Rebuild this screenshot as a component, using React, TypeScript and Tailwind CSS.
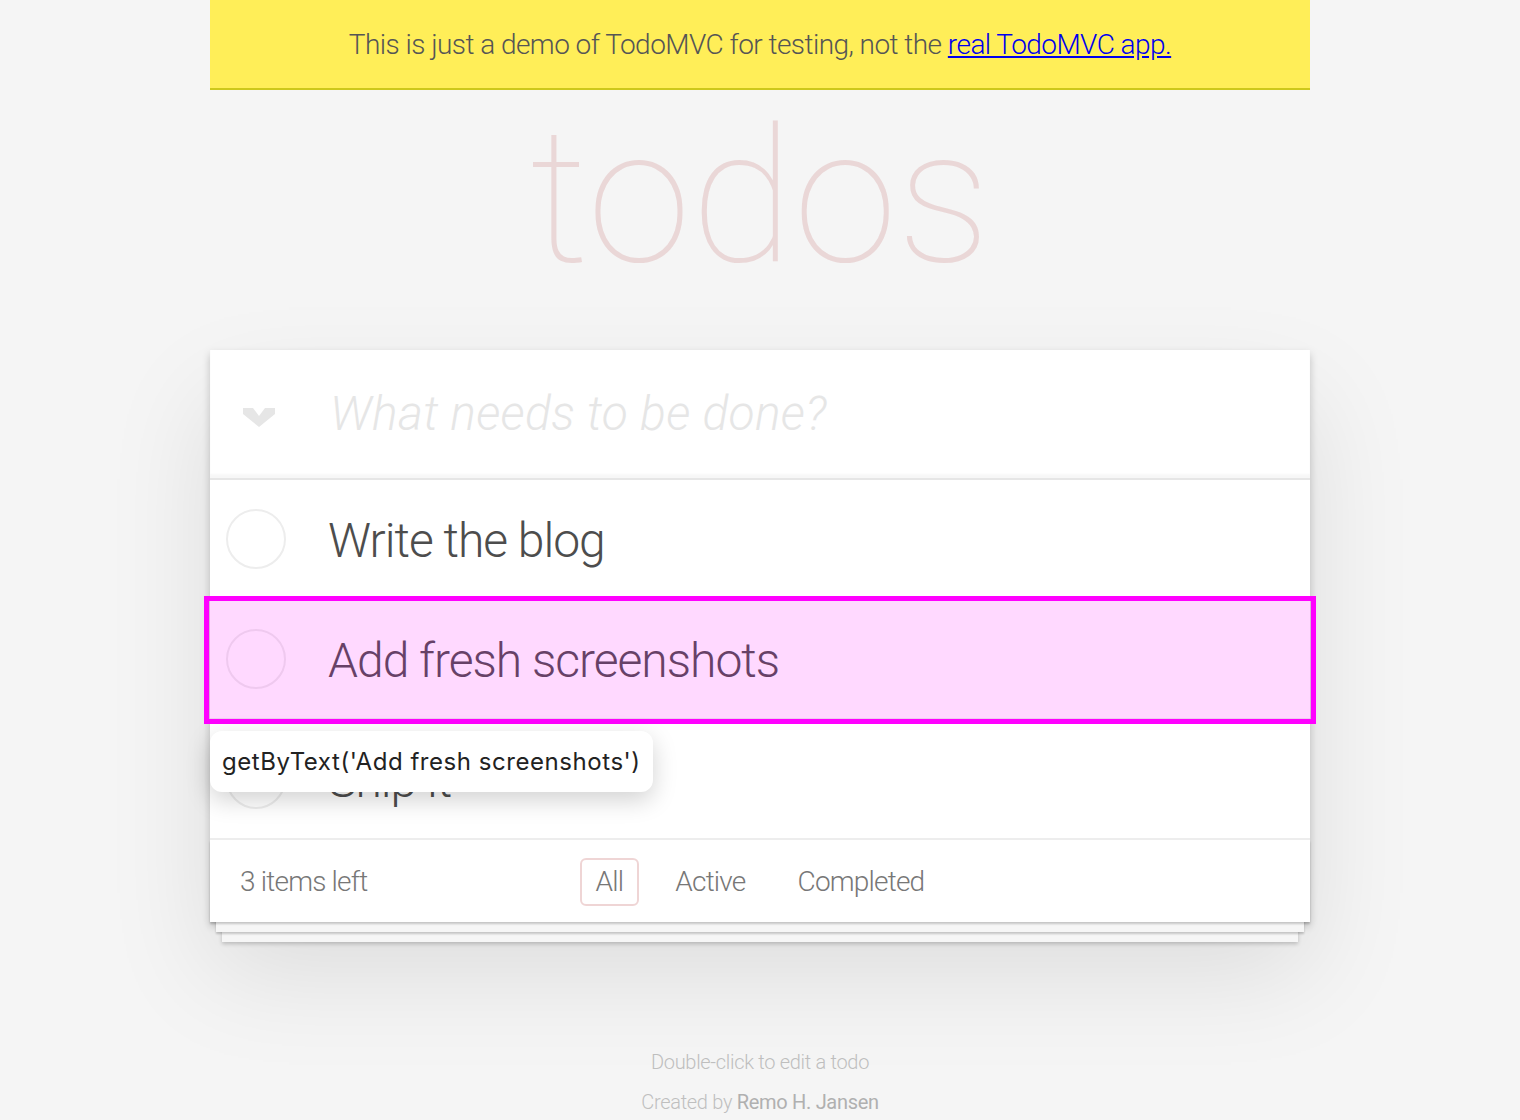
import React from "react";

type Todo = { id: number; title: string };

const todos: Todo[] = [
  { id: 1, title: "Write the blog" },
  { id: 2, title: "Add fresh screenshots" },
  { id: 3, title: "Ship it" },
];

function Chevron() {
  return (
    <svg width="32" height="20" viewBox="0 0 32 20" className="block">
      <polygon points="0,0 10,0 16,8 22,0 32,0 32,6 16,19 0,6" fill="#e6e6e6" />
    </svg>
  );
}

function Toggle() {
  return (
    <span className="block h-[60px] w-[60px] shrink-0 rounded-full border-2 border-[#ededed]" />
  );
}

export default function App() {
  return (
    <div className="min-h-screen bg-[#f5f5f5] font-['Roboto',sans-serif] text-[#4d4d4d]">
      <div className="mx-auto w-[1100px]">
        <div className="flex h-[90px] items-center justify-center border-b-2 border-[#cdc81b] bg-[#ffee58] pt-[2px] text-[28px] font-light tracking-[-0.55px] text-[#555]">
          <span>
            This is just a demo of TodoMVC for testing, not the{" "}
            <a href="#" className="text-[#0000ee] underline">
              real TodoMVC app.
            </a>
          </span>
        </div>

        <h1 className="h-[260px] pt-[7px] text-center text-[188px] font-thin leading-[200px] text-[rgba(175,47,47,0.15)]">
          todos
        </h1>

        <section className="relative bg-white shadow-[0_4px_8px_rgba(0,0,0,0.2),0_50px_100px_rgba(0,0,0,0.1)]">
          <header className="flex h-[128px] items-center shadow-[inset_0_-4px_2px_rgba(0,0,0,0.03)]">
            <div className="flex w-[120px] shrink-0 justify-center pr-[22px] pt-[8px]">
              <Chevron />
            </div>
            <span className="text-[48px] font-light italic tracking-[0.3px] text-[#e6e6e6]">
              What needs to be done?
            </span>
          </header>

          <ul className="relative border-t-2 border-[#e6e6e6]">
            {todos.map((todo) => (
              <li
                key={todo.id}
                className="flex h-[120px] items-center gap-[42px] border-b-2 border-[#ededed] pl-[16px]"
              >
                <Toggle />
                <label className="pt-[4px] text-[48px] font-light leading-[1.2] tracking-[-1px] text-[#4d4d4d]">
                  {todo.title}
                </label>
              </li>
            ))}

            <div className="absolute -left-[6px] top-[116px] h-[128px] w-[1112px] border-[5px] border-[#ff00ff] bg-[rgba(255,0,255,0.15)]" />

            <div className="absolute left-0 top-[251px] flex h-[61px] items-center rounded-[12px] bg-white px-[12px] font-['Inter',sans-serif] text-[24px] tracking-[0.55px] text-[#222] shadow-[0_8px_24px_rgba(0,0,0,0.18)]">
              getByText('Add fresh screenshots')
            </div>
          </ul>

          <footer className="grid h-[82px] grid-cols-[1fr_auto_1fr] items-center bg-white px-[30px] pt-[2px] text-[28px] font-light tracking-[-0.8px] text-[#777] shadow-[0_2px_2px_rgba(0,0,0,0.2),0_16px_0_-6px_#f6f6f6,0_18px_2px_-6px_rgba(0,0,0,0.2),0_32px_0_-12px_#f6f6f6,0_34px_4px_-12px_rgba(0,0,0,0.2)]">
            <span>3 items left</span>
            <ul className="flex items-center gap-[20px]">
              <li>
                <a href="#" className="block rounded-[6px] border-2 border-[rgba(175,47,47,0.2)] px-[14px] py-[6px] leading-[32px]">
                  All
                </a>
              </li>
              <li>
                <a href="#" className="block rounded-[6px] border-2 border-transparent px-[14px] py-[6px] leading-[32px]">
                  Active
                </a>
              </li>
              <li>
                <a href="#" className="block rounded-[6px] border-2 border-transparent px-[14px] py-[6px] leading-[32px]">
                  Completed
                </a>
              </li>
            </ul>
            <span />
          </footer>
        </section>

        <div className="mt-[130px] pb-[20px] text-center text-[20px] font-light leading-[20px] tracking-[-0.3px] text-[#bfbfbf]">
          <p>Double-click to edit a todo</p>
          <p className="mt-[20px]">
            Created by{" "}
            <a href="#" className="font-normal text-[#b0b0b0]">
              Remo H. Jansen
            </a>
          </p>
        </div>
      </div>
    </div>
  );
}
